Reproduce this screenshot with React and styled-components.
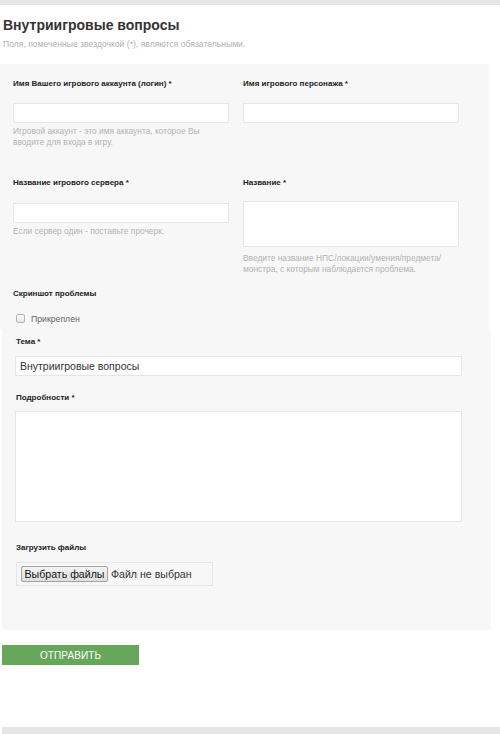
import React from "react";
import styled, { createGlobalStyle } from "styled-components";

const Global = createGlobalStyle`
  html, body { margin: 0; padding: 0; background: #ffffff; }
  body { font-family: "Liberation Sans", Arial, sans-serif; }
  * { box-sizing: border-box; }
`;

const Page = styled.div`
  width: 500px;
  display: flex;
  flex-direction: column;
`;

const TopBar = styled.div`
  height: 5px;
  background: #e6e6e6;
`;

const Header = styled.header`
  padding: 12px 0 0 3px;
  display: flex;
  flex-direction: column;
  gap: 6px;
`;

const Title = styled.h1`
  margin: 0;
  font-size: 14px;
  line-height: 16px;
  font-weight: bold;
  color: #333333;
`;

const Note = styled.p`
  margin: 0;
  font-size: 8.6px;
  line-height: 11px;
  color: #b0b0b0;
`;

const UpperPanel = styled.section`
  margin-top: 14px;
  width: 489px;
  background: #f7f7f7;
  padding: 14px 0 4px 13px;
`;

const FieldGrid = styled.div`
  display: grid;
  grid-template-columns: 216px 216px;
  column-gap: 14px;
  row-gap: 29px;
`;

const Field = styled.div`
  display: flex;
  flex-direction: column;
`;

const Label = styled.label`
  display: block;
  font-size: 8px;
  line-height: 11px;
  font-weight: bold;
  color: #222222;
  margin-left: ${(p) => p.$indent || 0}px;
`;

const TextInput = styled.div`
  margin-top: ${(p) => p.$gap}px;
  width: ${(p) => p.$width}px;
  height: ${(p) => p.$height}px;
  background: #ffffff;
  border: 1px solid #e6e6e6;
  font-size: 10.5px;
  color: #333333;
  padding: 0 4px;
  display: flex;
  align-items: center;
`;

const Help = styled.div`
  margin-top: ${(p) => p.$gap || 3}px;
  font-size: 8.4px;
  line-height: 11px;
  color: #b3b3b3;
`;

const Section = styled.div`
  margin-top: 13px;
`;

const CheckRow = styled.div`
  margin-top: 13px;
  margin-left: 3px;
  display: flex;
  align-items: center;
  gap: 6px;
  height: 13px;
`;

const CheckBox = styled.span`
  width: 9px;
  height: 9px;
  border: 1px solid #b5b5b5;
  border-radius: 2px;
  background: linear-gradient(#fdfdfd, #e6e6e6);
`;

const CheckText = styled.span`
  font-size: 8.7px;
  color: #666666;
`;

const LowerPanel = styled.section`
  margin-left: 2px;
  width: 489px;
  background: #f7f7f7;
  padding: 7px 0 44px 13px;
  display: flex;
  flex-direction: column;
`;

const Spacer = styled.div`
  height: ${(p) => p.$h}px;
`;

const FileBox = styled.div`
  margin-top: 9px;
  margin-left: 1px;
  width: 197px;
  height: 24px;
  border: 1px solid #e6e6e6;
  display: flex;
  align-items: center;
  padding-left: 4px;
  gap: 3px;
`;

const FileButton = styled.span`
  width: 87px;
  height: 16px;
  border: 1px solid #a3a3a3;
  border-radius: 2px;
  background: linear-gradient(#f4f4f4, #dedede);
  font-size: 10.6px;
  color: #111111;
  display: flex;
  align-items: center;
  justify-content: center;
`;

const FileText = styled.span`
  font-size: 10.6px;
  color: #333333;
`;

const Submit = styled.button`
  margin: 15px 0 0 2px;
  width: 137px;
  height: 20px;
  border: none;
  background: #67a65b;
  color: #ffffff;
  font-family: "Liberation Sans", Arial, sans-serif;
  font-size: 10px;
  padding: 0;
  letter-spacing: 0.1px;
`;

const BottomBar = styled.div`
  margin: 62px 0 0 2px;
  height: 8px;
  background: #e6e6e6;
`;

export default function App() {
  return (
    <Page>
      <Global />
      <TopBar />
      <Header>
        <Title>Внутриигровые вопросы</Title>
        <Note>Поля, помеченные звездочкой (*), являются обязательными.</Note>
      </Header>
      <UpperPanel>
        <FieldGrid>
          <Field>
            <Label>Имя Вашего игрового аккаунта (логин) *</Label>
            <TextInput $gap={14} $width={216} $height={20} />
            <Help>
              Игровой аккаунт - это имя аккаунта, которое Вы
              <br />
              вводите для входа в игру.
            </Help>
          </Field>
          <Field>
            <Label>Имя игрового персонажа *</Label>
            <TextInput $gap={14} $width={216} $height={20} />
          </Field>
          <Field>
            <Label>Название игрового сервера *</Label>
            <TextInput $gap={15} $width={216} $height={20} />
            <Help>Если сервер один - поставьте прочерк.</Help>
          </Field>
          <Field>
            <Label>Название *</Label>
            <TextInput $gap={13} $width={216} $height={46} />
            <Help $gap={6}>
              Введите название НПС/локации/умения/предмета/
              <br />
              монстра, с которым наблюдается проблема.
            </Help>
          </Field>
        </FieldGrid>
        <Section>
          <Label>Скриншот проблемы</Label>
        </Section>
        <CheckRow>
          <CheckBox />
          <CheckText>Прикреплен</CheckText>
        </CheckRow>
      </UpperPanel>
      <LowerPanel>
        <Label $indent={1}>Тема *</Label>
        <TextInput $gap={9} $width={447} $height={20}>
          Внутриигровые вопросы
        </TextInput>
        <Spacer $h={16} />
        <Label $indent={1}>Подробности *</Label>
        <TextInput $gap={8} $width={447} $height={111} />
        <Spacer $h={20} />
        <Label $indent={1}>Загрузить файлы</Label>
        <FileBox>
          <FileButton>Выбрать файлы</FileButton>
          <FileText>Файл не выбран</FileText>
        </FileBox>
      </LowerPanel>
      <Submit type="button">ОТПРАВИТЬ</Submit>
      <BottomBar />
    </Page>
  );
}
